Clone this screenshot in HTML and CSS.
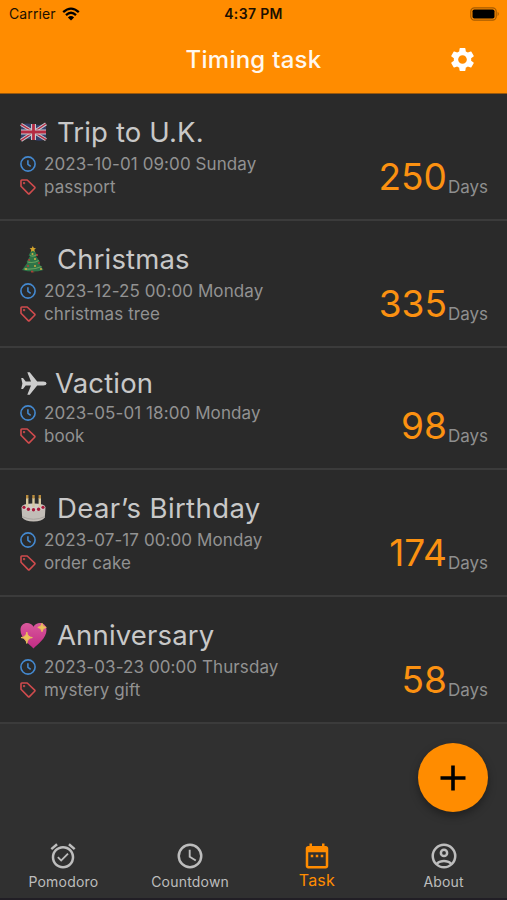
FILE: index.html
```
<!DOCTYPE html>
<html lang="en">
<head>
    <meta charset="UTF-8">
    <meta name="viewport" content="width=device-width, initial-scale=1.0">
    <title>Timing task</title>
    <link rel="stylesheet" href="styles.css">
</head>
<body>
    <!-- shared icons -->
    <svg class="sprite" width="0" height="0">
        <symbol id="clock" viewBox="0 0 16 16">
            <circle cx="8" cy="8" r="7.1"/>
            <path d="M7.9 4.2v4.1l2.8 2"/>
        </symbol>
        <symbol id="tag" viewBox="0 0 16 16">
            <path d="M1 1.8Q1 1 1.8 1L7.2 1 14.7 8.1Q15.3 8.7 14.7 9.3L9.4 14.6Q8.8 15.2 8.2 14.6L1 7.2z"/>
            <circle cx="4.1" cy="4.1" r=".4"/>
        </symbol>
    </svg>

    <header class="header">
        <div class="status">
            <div class="carrier">
                <span>Carrier</span>
                <svg class="wifi" viewBox="0 0 18 14">
                    <path d="M1.2 5.2Q9-2 16.8 5.2M4 8.1Q9 3.4 14 8.1" fill="none" stroke="#000" stroke-width="2.3"/>
                    <path d="M9 13.6L5.9 10.4Q9 7.6 12.1 10.4z"/>
                </svg>
            </div>
            <div class="time">4:37 PM</div>
            <svg class="battery" viewBox="0 0 30 14">
                <rect x=".8" y=".8" width="25.4" height="12.4" rx="3.6" fill="none" stroke="#a65b00" stroke-width="1.2"/>
                <rect x="2.5" y="2.5" width="22" height="9" rx="1.8"/>
                <path d="M27.6 4.8Q30 7 27.6 9.2z" fill="#a65b00"/>
            </svg>
        </div>
        <div class="navbar">
            <h1>Timing task</h1>
            <svg class="settings" viewBox="0 0 24 24">
                <path d="M19.14 12.94c.04-.3.06-.61.06-.94 0-.32-.02-.64-.07-.94l2.03-1.58c.18-.14.23-.41.12-.61l-1.92-3.32c-.12-.22-.37-.29-.59-.22l-2.39.96c-.5-.38-1.03-.7-1.62-.94l-.36-2.54c-.04-.24-.24-.41-.48-.41h-3.84c-.24 0-.43.17-.47.41l-.36 2.54c-.59.24-1.13.57-1.62.94l-2.39-.96c-.22-.08-.47 0-.59.22L2.74 8.87c-.12.21-.08.47.12.61l2.03 1.58c-.05.3-.09.63-.09.94s.02.64.07.94l-2.03 1.58c-.18.14-.23.41-.12.61l1.92 3.32c.12.22.37.29.59.22l2.39-.96c.5.38 1.03.7 1.62.94l.36 2.54c.05.24.24.41.48.41h3.84c.24 0 .44-.17.47-.41l.36-2.54c.59-.24 1.13-.56 1.62-.94l2.39.96c.22.08.47 0 .59-.22l1.92-3.32c.12-.22.07-.47-.12-.61l-2.01-1.58zM12 15.6c-1.98 0-3.6-1.62-3.6-3.6s1.62-3.6 3.6-3.6 3.6 1.62 3.6 3.6-1.62 3.6-3.6 3.6z"/>
            </svg>
        </div>
    </header>

    <main class="list">
        <div class="task">
            <div class="info">
                <h2>
                    <svg class="emoji" viewBox="0 0 27 27">
                        <path d="M1 5.4Q7 3.6 13 5.2T26 4.8V20.6Q20 22.6 13.5 20.8T1 21.4z" fill="#35406f"/>
                        <path d="M1 5.4L26 20.6M26 4.8L1 21.4" stroke="#c9c9ce" stroke-width="3.4"/>
                        <path d="M1 5.4L26 20.6M26 4.8L1 21.4" stroke="#b52b43" stroke-width="1.3"/>
                        <path d="M13.5 5v16M1 13h25" stroke="#c9c9ce" stroke-width="5"/>
                        <path d="M13.5 5v16M1 13h25" stroke="#b52b43" stroke-width="2.8"/>
                    </svg>
                    <span>Trip to U.K.</span>
                </h2>
                <p><svg class="clock"><use href="#clock"/></svg>2023-10-01 09:00 Sunday</p>
                <p><svg class="tag"><use href="#tag"/></svg>passport</p>
            </div>
            <div class="count"><b>250</b><span>Days</span></div>
        </div>

        <div class="task">
            <div class="info">
                <h2>
                    <svg class="emoji" viewBox="0 0 27 27">
                        <path d="M11.3 22h3v4.5h-3z" fill="#713e2c"/>
                        <path d="M12.8 2L17.5 9.5 16 10 20 16 18.4 16.5 23.5 24Q13 27 2 24L7.5 16.5 6.5 16 10 10 8.5 9.5z" fill="#2e7448"/>
                        <path d="M10 9.5Q14 11 17 8.5M7.5 16Q14 17.5 18.8 14.5M4 22.8Q14 24 21.5 20.5" fill="none" stroke="#66a05e" stroke-width="1.2"/>
                        <path d="M12.8 0l1 2.1 2.2.2-1.7 1.5.5 2.2-2-1.2-2 1.2.5-2.2-1.7-1.5 2.2-.2z" fill="#d5a52c"/>
                        <g fill="#b43b3a"><circle cx="17" cy="9" r="1"/><circle cx="9.2" cy="14" r="1"/><circle cx="19" cy="17" r="1"/><circle cx="12" cy="25.5" r="1"/><circle cx="8" cy="20" r="1"/></g>
                        <g fill="#d2ad45"><circle cx="12.5" cy="8" r="1"/><circle cx="15" cy="13" r="1"/><circle cx="6" cy="23" r="1"/><circle cx="15" cy="20" r="1"/><circle cx="21" cy="23" r="1"/></g>
                    </svg>
                    <span>Christmas</span>
                </h2>
                <p><svg class="clock"><use href="#clock"/></svg>2023-12-25 00:00 Monday</p>
                <p><svg class="tag"><use href="#tag"/></svg>christmas tree</p>
            </div>
            <div class="count"><b>335</b><span>Days</span></div>
        </div>

        <div class="task plain">
            <div class="info">
                <h2>
                    <svg class="emoji" viewBox="0 0 27 27">
                        <path d="M26.6 13.5Q26.4 15.4 23.4 15.5H17.2L9.7 24.8H7.3L11 15.5H5.7L3 19H1.2L2.4 13.5 1.2 8H3L5.7 11.5H11L7.3 2.2H9.7L17.2 11.5H23.4Q26.4 11.6 26.6 13.5z" fill="#ccc"/>
                    </svg>
                    <span>Vaction</span>
                </h2>
                <p><svg class="clock"><use href="#clock"/></svg>2023-05-01 18:00 Monday</p>
                <p><svg class="tag"><use href="#tag"/></svg>book</p>
            </div>
            <div class="count"><b>98</b><span>Days</span></div>
        </div>

        <div class="task">
            <div class="info">
                <h2 class="wide">
                    <svg class="emoji" viewBox="0 0 27 27">
                        <path d="M1.5 12.5Q1.5 8.5 13.5 8.5T25.5 12.5L24.8 22.5Q22 26.5 13.5 26.5T2.2 22.5z" fill="#c2bdb7"/>
                        <ellipse cx="13.5" cy="12.5" rx="11.5" ry="3.7" fill="#d0cbc6"/>
                        <path d="M2 21.5Q13.5 27 25 21.5" fill="none" stroke="#a8a39f" stroke-width="1"/>
                        <path d="M7.2 3v9M13.5 3v9M19.8 3v9" stroke="#d5c8a0" stroke-width="2.4"/>
                        <path d="M7.2 0v3.4M13.5 0v3.4M19.8 0v3.4" stroke="#b98b3c" stroke-width="2.4"/>
                        <g fill="#a8193a"><circle cx="4" cy="12.3" r="1.6"/><circle cx="8.4" cy="14.3" r="1.7"/><circle cx="13.5" cy="14.8" r="1.7"/><circle cx="18.6" cy="14.3" r="1.7"/><circle cx="23" cy="12.3" r="1.6"/></g>
                    </svg>
                    <span>Dear’s Birthday</span>
                </h2>
                <p><svg class="clock"><use href="#clock"/></svg>2023-07-17 00:00 Monday</p>
                <p><svg class="tag"><use href="#tag"/></svg>order cake</p>
            </div>
            <div class="count"><b>174</b><span>Days</span></div>
        </div>

        <div class="task">
            <div class="info">
                <h2>
                    <svg class="emoji" viewBox="0 0 27 27">
                        <defs>
                            <linearGradient id="pink" x2="0" y2="1">
                                <stop offset="0" stop-color="#d9589b"/>
                                <stop offset="1" stop-color="#c22b85"/>
                            </linearGradient>
                        </defs>
                        <path d="M13.5 26.5C9.5 22 .5 16.5.5 8 .5-.3 10.5-.8 13.5 4.8 16.5-.8 26.5-.3 26.5 8c0 8.5-9 14-13 18.5z" fill="url(#pink)"/>
                        <path d="M6.8 10Q7.4 15 12.4 15.6 7.4 16.2 6.8 21.5 6.2 16.2 1 15.6 6.2 15 6.8 10zM22 1.2Q22.5 5 26.3 5.4 22.5 5.8 22 9.8 21.5 5.8 17.8 5.4 21.5 5 22 1.2z" fill="#eac25a" stroke="#eac25a" stroke-width=".9"/>
                    </svg>
                    <span>Anniversary</span>
                </h2>
                <p><svg class="clock"><use href="#clock"/></svg>2023-03-23 00:00 Thursday</p>
                <p><svg class="tag"><use href="#tag"/></svg>mystery gift</p>
            </div>
            <div class="count"><b>58</b><span>Days</span></div>
        </div>
    </main>

    <button class="add" aria-label="Add task">
        <svg viewBox="0 0 26 26"><path d="M13 .5v25M.5 13h25"/></svg>
    </button>

    <nav class="tabs">
        <a class="tab">
            <svg viewBox="0 0 24 24"><path d="M22 5.72l-4.6-3.86-1.29 1.53 4.6 3.86L22 5.72zM7.88 3.39L6.6 1.86 2 5.71l1.29 1.53 4.59-3.85zM12 4c-4.97 0-9 4.03-9 9s4.02 9 9 9a9 9 0 0 0 0-18zm0 16c-3.87 0-7-3.13-7-7s3.13-7 7-7 7 3.13 7 7-3.13 7-7 7zm-1.46-5.47L8.41 12.4l-1.06 1.06 3.18 3.18 6-6-1.06-1.06-4.93 4.95z"/></svg>
            <span>Pomodoro</span>
        </a>
        <a class="tab">
            <svg viewBox="0 0 24 24"><path d="M12 2a10 10 0 1 0 0 20 10 10 0 0 0 0-20zm0 18a8 8 0 1 1 0-16 8 8 0 0 1 0 16zM12.5 7H11v6l5.25 3.15.75-1.23-4.5-2.67z"/></svg>
            <span>Countdown</span>
        </a>
        <a class="tab active">
            <svg viewBox="0 0 24 24"><path d="M9 11H7v2h2v-2zm4 0h-2v2h2v-2zm4 0h-2v2h2v-2zm2-7h-1V2h-2v2H8V2H6v2H5c-1.11 0-1.99.9-1.99 2L3 20c0 1.1.89 2 2 2h14c1.1 0 2-.9 2-2V6c0-1.1-.9-2-2-2zm0 16H5V9h14v11z"/></svg>
            <span>Task</span>
        </a>
        <a class="tab">
            <svg viewBox="0 0 24 24"><path fill-rule="evenodd" d="M12 2a10 10 0 1 0 0 20 10 10 0 0 0 0-20zM7.35 18.5C8.66 17.56 10.26 17 12 17s3.34.56 4.65 1.5C15.34 19.44 13.74 20 12 20s-3.34-.56-4.65-1.5zm10.79-1.38C16.45 15.8 14.32 15 12 15s-4.45.8-6.14 2.12C4.7 15.73 4 13.95 4 12c0-4.42 3.58-8 8-8s8 3.58 8 8c0 1.95-.7 3.73-1.86 5.12zM12 6a3.5 3.5 0 1 0 0 7 3.5 3.5 0 0 0 0-7zm0 5a1.5 1.5 0 1 1 0-3 1.5 1.5 0 0 1 0 3z"/></svg>
            <span>About</span>
        </a>
    </nav>
</body>
</html>
```
FILE: styles.css
```
* {
    box-sizing: border-box;
    margin: 0;
    padding: 0;
}
body {
    display: flex;
    flex-direction: column;
    height: 900px;
    overflow: hidden;
    font-family: 'Inter', sans-serif;
    background: #303030;
    color: #c8c8c8;
    border-bottom: 2px solid #211e25;
}
.sprite {
    position: absolute;
}
.header {
    height: 94px;
    background: #ff8c00;
    border-bottom: 1px solid #98580d;
}
.status {
    display: grid;
    grid-template-columns: 1fr auto 1fr;
    align-items: center;
    height: 27px;
    padding: 0 7px 0 9px;
    color: #1b1000;
    font-size: 14px;
}
.carrier {
    display: flex;
    align-items: center;
    gap: 6px;
    letter-spacing: 0.1px;
}
.wifi {
    width: 18px;
    height: 14px;
}
.time {
    padding-right: 2px;
    font-size: 14px;
    font-weight: 600;
    letter-spacing: 0.35px;
}
.battery {
    width: 30px;
    height: 14px;
    justify-self: end;
}
.navbar {
    display: grid;
    grid-template-columns: 1fr auto 1fr;
    align-items: center;
    height: 65px;
    padding-right: 30px;
    padding-left: 30px;
}
.navbar h1 {
    grid-column: 2;
    font-size: 24px;
    font-weight: 500;
    letter-spacing: 0.25px;
    color: #fff8ee;
}
.settings {
    width: 29px;
    height: 29px;
    justify-self: end;
    fill: #fff;
}
.list {
    background: #2a2a2a;
}
.task {
    display: flex;
    justify-content: space-between;
    align-items: flex-end;
    height: 127px;
    padding: 0 19px 20px 20px;
    border-bottom: 2px solid #3b3b3b;
}
.task.plain {
    height: 122px;
}
.info {
    padding-bottom: 1px;
}
.task h2 {
    display: flex;
    align-items: center;
    gap: 10px;
    height: 36px;
    margin-bottom: 2px;
    font-size: 27.5px;
    font-weight: 400;
    letter-spacing: 0.15px;
    white-space: nowrap;
}
.task h2.wide {
    letter-spacing: 0.4px;
}
.task.plain h2 {
    gap: 8px;
    height: 34px;
    margin-bottom: 1px;
}
.emoji {
    width: 27px;
    height: 27px;
}
.task p {
    display: flex;
    align-items: center;
    gap: 8px;
    height: 23px;
    color: #929292;
    font-size: 17px;
    letter-spacing: 0.09px;
    white-space: nowrap;
}
.clock, .tag {
    width: 16px;
    height: 16px;
    fill: none;
    stroke-width: 1.6;
    stroke-linejoin: round;
}
.clock {
    stroke: #4489d0;
}
.tag {
    stroke: #cf4b4d;
}
.count {
    display: flex;
    align-items: flex-end;
    gap: 1px;
}
.count b {
    color: #fb9111;
    font-size: 37px;
    font-weight: 400;
    line-height: 45px;
}
.count span {
    color: #8f8f8f;
    font-size: 17px;
    line-height: 23px;
}
.add {
    position: absolute;
    top: 743px;
    left: 418px;
    display: flex;
    align-items: center;
    justify-content: center;
    width: 70px;
    height: 69px;
    border: none;
    border-radius: 50%;
    background: #ff8c00;
    box-shadow: 0 4px 8px rgba(0, 0, 0, 0.35);
}
.add svg {
    width: 26px;
    height: 26px;
    stroke: #000;
    stroke-width: 3.6;
}
.tabs {
    display: grid;
    grid-template-columns: repeat(4, 1fr);
    height: 64px;
    margin-top: auto;
}
.tab {
    display: flex;
    flex-direction: column;
    align-items: center;
    padding-top: 7px;
    color: #bdbdbd;
    font-size: 14px;
    letter-spacing: 0.2px;
}
.tab svg {
    width: 30px;
    height: 30px;
    fill: currentColor;
}
.tab span {
    margin-top: 2px;
    line-height: 18px;
}
.tab.active {
    color: #ff8c00;
    font-size: 16px;
}
.tab.active span {
    margin-top: 0;
}
```
